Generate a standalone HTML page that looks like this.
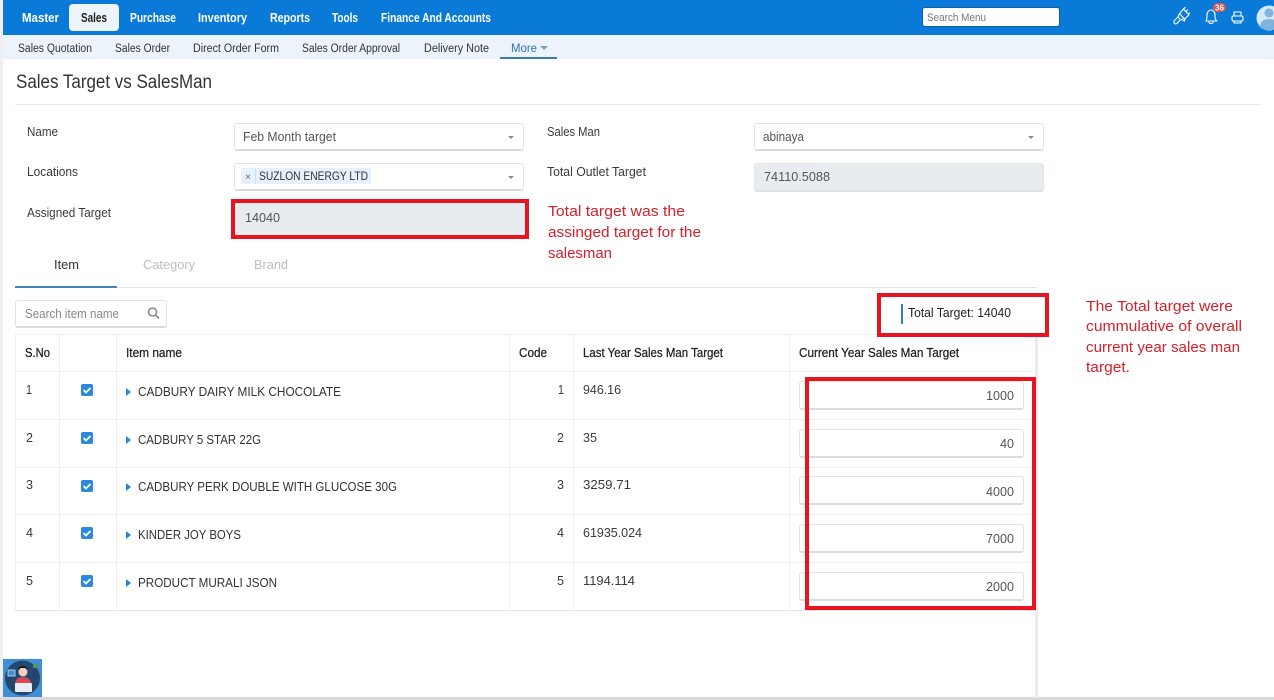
<!DOCTYPE html>
<html lang="en">
<head>
<meta charset="utf-8">
<title>Sales Target vs SalesMan</title>
<style>
html,body{margin:0;padding:0;background:#fff;}
body{width:1274px;height:700px;overflow:hidden;position:relative;font-family:"Liberation Sans",sans-serif;}
.b{position:absolute;box-sizing:border-box;}
.inp{background:#fff;border:1px solid #e3e3e3;border-bottom:2px solid #dcdcdc;border-radius:3px;}
.dis{background:#e9ecef;border:1px solid #e3e5e8;border-radius:3px;}
.red{border:4px solid #e8141f;background:transparent;}
svg{position:absolute;left:0;top:0;}
text{font-family:"Liberation Sans",sans-serif;font-size:12.5px;fill:#3a3a3a;}
.nav{font-size:13px;font-weight:bold;fill:#fff;}
.sub{font-size:11.5px;fill:#333;}
.h{fill:#222;font-size:12.5px;stroke:#222;stroke-width:.25px;}
.r{font-size:15px;fill:#d4202a;}
.g{fill:#555;}
</style>
</head>
<body>
<div class="b" style="left:0;top:0;width:3px;height:700px;background:#f0f0f0;"></div>
<div class="b" style="left:3px;top:0;width:1271px;height:35px;background:#0a7ad8;"></div>
<div class="b" style="left:69px;top:4px;width:50px;height:27px;background:#eef4fb;border-radius:4px;"></div>
<div class="b" style="left:922px;top:7px;width:138px;height:20px;background:#fff;border-radius:3px;border:1px solid #0b5ea8;"></div>
<div class="b" style="left:3px;top:35px;width:1271px;height:24px;background:#edf3fb;"></div>
<div class="b" style="left:500px;top:57px;width:57px;height:2px;background:#3b7ab0;"></div>
<div class="b" style="left:0;top:697px;width:1274px;height:3px;background:#d9d9d9;"></div>
<div class="b" style="left:15px;top:104px;width:1247px;height:1px;background:#ececec;"></div>

<div class="b inp" style="left:234px;top:123px;width:290px;height:28px;"></div>
<div class="b inp" style="left:234px;top:163px;width:290px;height:28px;"></div>
<div class="b" style="left:241px;top:168px;width:130px;height:16px;background:#e6f1fb;"></div>
<div class="b" style="left:255px;top:168px;width:1px;height:16px;background:#c9dff2;"></div>
<div class="b dis" style="left:234px;top:202px;width:292px;height:34px;"></div>
<div class="b red" style="left:231px;top:199px;width:298px;height:40px;"></div>
<div class="b inp" style="left:754px;top:123px;width:290px;height:28px;"></div>
<div class="b dis" style="left:754px;top:163px;width:290px;height:29px;border-bottom:2px solid #dfe2e5;"></div>

<div class="b" style="left:15px;top:287px;width:1022px;height:1px;background:#e4e4e4;"></div>
<div class="b" style="left:15px;top:286px;width:102px;height:2px;background:#3f87b8;"></div>

<div class="b inp" style="left:15px;top:300px;width:152px;height:28px;"></div>

<!-- table grid -->
<div class="b" style="left:15px;top:334px;width:1020px;height:1px;background:#eeeeee;"></div>
<div class="b" style="left:15px;top:371px;width:1020px;height:1px;background:#eeeeee;"></div>
<div class="b" style="left:15px;top:419px;width:1020px;height:1px;background:#eeeeee;"></div>
<div class="b" style="left:15px;top:467px;width:1020px;height:1px;background:#eeeeee;"></div>
<div class="b" style="left:15px;top:514px;width:1020px;height:1px;background:#eeeeee;"></div>
<div class="b" style="left:15px;top:562px;width:1020px;height:1px;background:#eeeeee;"></div>
<div class="b" style="left:15px;top:610px;width:1020px;height:1px;background:#e2e2e2;"></div>
<div class="b" style="left:15px;top:334px;width:1px;height:277px;background:#eeeeee;"></div>
<div class="b" style="left:59px;top:334px;width:1px;height:277px;background:#eeeeee;"></div>
<div class="b" style="left:116px;top:334px;width:1px;height:277px;background:#eeeeee;"></div>
<div class="b" style="left:509px;top:334px;width:1px;height:277px;background:#eeeeee;"></div>
<div class="b" style="left:573px;top:334px;width:1px;height:277px;background:#eeeeee;"></div>
<div class="b" style="left:789px;top:334px;width:1px;height:277px;background:#eeeeee;"></div>
<div class="b" style="left:1035px;top:337px;width:3px;height:361px;background:#e9ebed;"></div>

<div class="b" style="left:901px;top:304px;width:2px;height:20px;background:#2f80c0;"></div>
<div class="b" style="left:878px;top:294px;width:170px;height:42px;background:#fff;"></div>
<div class="b" style="left:901px;top:304px;width:2px;height:20px;background:#2f80c0;"></div>
<div class="b red" style="left:877px;top:293px;width:172px;height:44px;"></div>

<div class="b inp" style="left:799px;top:381px;width:225px;height:29px;"></div>
<div class="b inp" style="left:799px;top:429px;width:225px;height:29px;"></div>
<div class="b inp" style="left:799px;top:476px;width:225px;height:29px;"></div>
<div class="b inp" style="left:799px;top:524px;width:225px;height:29px;"></div>
<div class="b inp" style="left:799px;top:572px;width:225px;height:29px;"></div>
<div class="b red" style="left:805px;top:377px;width:231px;height:233px;"></div>

<div class="b" style="left:81px;top:384px;width:12px;height:12px;background:#2b8ade;border-radius:2px;"></div>
<div class="b" style="left:81px;top:432px;width:12px;height:12px;background:#2b8ade;border-radius:2px;"></div>
<div class="b" style="left:81px;top:480px;width:12px;height:12px;background:#2b8ade;border-radius:2px;"></div>
<div class="b" style="left:81px;top:527px;width:12px;height:12px;background:#2b8ade;border-radius:2px;"></div>
<div class="b" style="left:81px;top:575px;width:12px;height:12px;background:#2b8ade;border-radius:2px;"></div>

<svg width="1274" height="700" viewBox="0 0 1274 700" xmlns="http://www.w3.org/2000/svg">
<!-- top nav -->
<text class="nav" x="22" y="22" textLength="37" lengthAdjust="spacingAndGlyphs">Master</text>
<text class="nav" x="81" y="22" textLength="26" lengthAdjust="spacingAndGlyphs" style="fill:#222">Sales</text>
<text class="nav" x="130" y="22" textLength="46" lengthAdjust="spacingAndGlyphs">Purchase</text>
<text class="nav" x="198" y="22" textLength="49" lengthAdjust="spacingAndGlyphs">Inventory</text>
<text class="nav" x="270" y="22" textLength="40" lengthAdjust="spacingAndGlyphs">Reports</text>
<text class="nav" x="332" y="22" textLength="26" lengthAdjust="spacingAndGlyphs">Tools</text>
<text class="nav" x="381" y="22" textLength="110" lengthAdjust="spacingAndGlyphs">Finance And Accounts</text>
<text x="927" y="21" textLength="59" lengthAdjust="spacingAndGlyphs" style="font-size:11px;fill:#777">Search Menu</text>

<!-- top icons -->
<g fill="none" stroke="#fff" stroke-width="1.1" stroke-linejoin="round" stroke-linecap="round">
<!-- paint brush: bristle block upper right, handle lower left -->
<path d="M1179.500 13.500l4-4.500 5.500 6-4.500 4z"/>
<path d="M1183.500 9l1.500-1.500M1186 11.500l1.500-1.500M1188 14l1.500-1"/>
<path d="M1179.500 13.500l-1.500 3.500 2 2 4.500 2 .500-2-2-.500"/>
<path d="M1178 17l-4 4c-.5 1 0 2.500 1.500 3l1.500-.5 3.500-4"/>
<!-- bell -->
<path d="M1206 21c1-1 1-3 1-6 0-3 2-5 4-5s4 2 4 5c0 3 0 5 2 6z"/>
<path d="M1209 22c0 2 4 2 4 0"/>
<!-- printer -->
<path d="M1234 16v-4h7v4"/>
<rect x="1232" y="16" width="11" height="5" rx="1.500"/>
<path d="M1234 21h7v2h-7z"/>
</g>
<rect x="1213" y="3" width="13" height="9" rx="4.500" fill="#e2504f"/>
<text x="1215" y="10.500" textLength="9" lengthAdjust="spacingAndGlyphs" style="font-size:8px;font-weight:bold;fill:#fff">36</text>
<circle cx="1269" cy="18" r="12.500" fill="#d4eafb"/>
<circle cx="1269" cy="13" r="4.500" fill="#7eb4de"/>
<path d="M1260 27c0-6 4-8 9-8s9 2 9 8c-2 2-5 3-9 3s-7-1-9-3z" fill="#7eb4de"/>

<!-- sub nav -->
<text class="sub" x="18" y="52" textLength="74" lengthAdjust="spacingAndGlyphs">Sales Quotation</text>
<text class="sub" x="115" y="52" textLength="55" lengthAdjust="spacingAndGlyphs">Sales Order</text>
<text class="sub" x="193" y="52" textLength="86" lengthAdjust="spacingAndGlyphs">Direct Order Form</text>
<text class="sub" x="302" y="52" textLength="98" lengthAdjust="spacingAndGlyphs">Sales Order Approval</text>
<text class="sub" x="424" y="52" textLength="65" lengthAdjust="spacingAndGlyphs">Delivery Note</text>
<text class="sub" x="511" y="52" textLength="26" lengthAdjust="spacingAndGlyphs" style="fill:#2a73b5">More</text>
<path d="M540 46h8l-4 4z" fill="#7d9dbb"/>

<!-- title -->
<text x="16" y="88" textLength="196" lengthAdjust="spacingAndGlyphs" style="font-size:19px;fill:#333">Sales Target vs SalesMan</text>

<!-- form -->
<text x="27" y="136" textLength="31" lengthAdjust="spacingAndGlyphs">Name</text>
<text x="27" y="176" textLength="51" lengthAdjust="spacingAndGlyphs">Locations</text>
<text x="27" y="217" textLength="84" lengthAdjust="spacingAndGlyphs">Assigned Target</text>
<text x="547" y="136" textLength="53" lengthAdjust="spacingAndGlyphs">Sales Man</text>
<text x="547" y="176" textLength="99" lengthAdjust="spacingAndGlyphs">Total Outlet Target</text>
<text x="243" y="141" textLength="93" lengthAdjust="spacingAndGlyphs" class="g">Feb Month target</text>
<text x="245" y="180" style="font-size:10px;fill:#666" textLength="6" lengthAdjust="spacingAndGlyphs">×</text>
<text x="259" y="180" textLength="109" lengthAdjust="spacingAndGlyphs" style="font-size:11.500px;fill:#333">SUZLON ENERGY LTD</text>
<text x="245" y="222" textLength="35" lengthAdjust="spacingAndGlyphs" class="g">14040</text>
<text x="763" y="141" textLength="41" lengthAdjust="spacingAndGlyphs" class="g">abinaya</text>
<text x="764" y="181" textLength="66" lengthAdjust="spacingAndGlyphs" class="g">74110.5088</text>
<path d="M508 136h6l-3 3z M508 176h6l-3 3z M1028 136h6l-3 3z" fill="#888"/>

<!-- red notes -->
<text class="r" x="548" y="216" textLength="137" lengthAdjust="spacingAndGlyphs">Total target was the</text>
<text class="r" x="548" y="237" textLength="153" lengthAdjust="spacingAndGlyphs">assinged target for the</text>
<text class="r" x="548" y="258" textLength="64" lengthAdjust="spacingAndGlyphs">salesman</text>
<text class="r" x="1086" y="311" textLength="147" lengthAdjust="spacingAndGlyphs">The Total target were</text>
<text class="r" x="1086" y="331" textLength="156" lengthAdjust="spacingAndGlyphs">cummulative of overall</text>
<text class="r" x="1086" y="352" textLength="154" lengthAdjust="spacingAndGlyphs">current year sales man</text>
<text class="r" x="1086" y="372" textLength="44" lengthAdjust="spacingAndGlyphs">target.</text>

<!-- tabs -->
<text x="54" y="269" textLength="25" lengthAdjust="spacingAndGlyphs" style="font-size:13px;fill:#333">Item</text>
<text x="143" y="269" textLength="52" lengthAdjust="spacingAndGlyphs" style="font-size:13px;fill:#bdbdbd">Category</text>
<text x="254" y="269" textLength="34" lengthAdjust="spacingAndGlyphs" style="font-size:13px;fill:#bdbdbd">Brand</text>

<!-- search + total -->
<text x="25" y="318" textLength="94" lengthAdjust="spacingAndGlyphs" style="fill:#888">Search item name</text>
<circle cx="152.500" cy="312" r="4" fill="none" stroke="#888" stroke-width="1.500"/>
<path d="M155.500 315l3.500 3.500" stroke="#888" stroke-width="1.600"/>
<text x="908" y="317" textLength="103" lengthAdjust="spacingAndGlyphs" style="fill:#222">Total Target: 14040</text>

<!-- table header -->
<text class="h" x="25" y="357" textLength="25" lengthAdjust="spacingAndGlyphs">S.No</text>
<text class="h" x="126" y="357" textLength="56" lengthAdjust="spacingAndGlyphs">Item name</text>
<text class="h" x="519" y="357" textLength="28" lengthAdjust="spacingAndGlyphs">Code</text>
<text class="h" x="583" y="357" textLength="140" lengthAdjust="spacingAndGlyphs">Last Year Sales Man Target</text>
<text class="h" x="799" y="357" textLength="160" lengthAdjust="spacingAndGlyphs">Current Year Sales Man Target</text>

<!-- checks -->
<g fill="none" stroke="#fff" stroke-width="1.800">
<path d="M83.500 390l2.500 2.500 4.500-4.500"/>
<path d="M83.500 438l2.500 2.500 4.500-4.500"/>
<path d="M83.500 486l2.500 2.500 4.500-4.500"/>
<path d="M83.500 533l2.500 2.500 4.500-4.500"/>
<path d="M83.500 581l2.500 2.500 4.500-4.500"/>
</g>
<!-- triangles -->
<g fill="#2b84c8">
<path d="M126 388l5 4-5 4z"/>
<path d="M126 436l5 4-5 4z"/>
<path d="M126 483l5 4-5 4z"/>
<path d="M126 531l5 4-5 4z"/>
<path d="M126 579l5 4-5 4z"/>
</g>

<!-- row 1 -->
<text x="26" y="394" textLength="6" lengthAdjust="spacingAndGlyphs">1</text>
<text x="138" y="396" textLength="203" lengthAdjust="spacingAndGlyphs" style="fill:#333">CADBURY DAIRY MILK CHOCOLATE</text>
<text x="558" y="394" textLength="6" lengthAdjust="spacingAndGlyphs">1</text>
<text x="583" y="394" textLength="38" lengthAdjust="spacingAndGlyphs">946.16</text>
<text x="986" y="400" textLength="28" lengthAdjust="spacingAndGlyphs" class="g">1000</text>
<!-- row 2 -->
<text x="26" y="442" textLength="7" lengthAdjust="spacingAndGlyphs">2</text>
<text x="138" y="444" textLength="123" lengthAdjust="spacingAndGlyphs" style="fill:#333">CADBURY 5 STAR 22G</text>
<text x="557" y="442" textLength="7" lengthAdjust="spacingAndGlyphs">2</text>
<text x="583" y="442" textLength="14" lengthAdjust="spacingAndGlyphs">35</text>
<text x="1000" y="448" textLength="14" lengthAdjust="spacingAndGlyphs" class="g">40</text>
<!-- row 3 -->
<text x="26" y="489" textLength="7" lengthAdjust="spacingAndGlyphs">3</text>
<text x="138" y="491" textLength="259" lengthAdjust="spacingAndGlyphs" style="fill:#333">CADBURY PERK DOUBLE WITH GLUCOSE 30G</text>
<text x="557" y="489" textLength="7" lengthAdjust="spacingAndGlyphs">3</text>
<text x="583" y="489" textLength="48" lengthAdjust="spacingAndGlyphs">3259.71</text>
<text x="986" y="496" textLength="28" lengthAdjust="spacingAndGlyphs" class="g">4000</text>
<!-- row 4 -->
<text x="26" y="537" textLength="7" lengthAdjust="spacingAndGlyphs">4</text>
<text x="138" y="539" textLength="103" lengthAdjust="spacingAndGlyphs" style="fill:#333">KINDER JOY BOYS</text>
<text x="557" y="537" textLength="7" lengthAdjust="spacingAndGlyphs">4</text>
<text x="583" y="537" textLength="59" lengthAdjust="spacingAndGlyphs">61935.024</text>
<text x="986" y="543" textLength="28" lengthAdjust="spacingAndGlyphs" class="g">7000</text>
<!-- row 5 -->
<text x="26" y="585" textLength="7" lengthAdjust="spacingAndGlyphs">5</text>
<text x="138" y="587" textLength="139" lengthAdjust="spacingAndGlyphs" style="fill:#333">PRODUCT MURALI JSON</text>
<text x="557" y="585" textLength="7" lengthAdjust="spacingAndGlyphs">5</text>
<text x="583" y="585" textLength="52" lengthAdjust="spacingAndGlyphs">1194.114</text>
<text x="986" y="591" textLength="28" lengthAdjust="spacingAndGlyphs" class="g">2000</text>

<!-- chat avatar -->
<rect x="3" y="659" width="39" height="38" fill="#3f8fd6"/>
<circle cx="22.500" cy="678" r="17.500" fill="#24476f"/>
<rect x="8" y="670" width="7" height="6" fill="#3f8fd6" stroke="#cfe4f5" stroke-width=".8"/>
<rect x="33" y="664" width="6" height="4" fill="#4c9a6a"/>
<circle cx="23" cy="672" r="4.500" fill="#f1d0bd"/>
<path d="M18 670c0-5 10-5 10 0l-2-2h-6z" fill="#111"/>
<path d="M15 684c0-5 4-7 8-7s8 2 8 7z" fill="#d9474f"/>
<rect x="15" y="683" width="17" height="9" rx="1" fill="#e8edf2"/>
</svg>
</body>
</html>
